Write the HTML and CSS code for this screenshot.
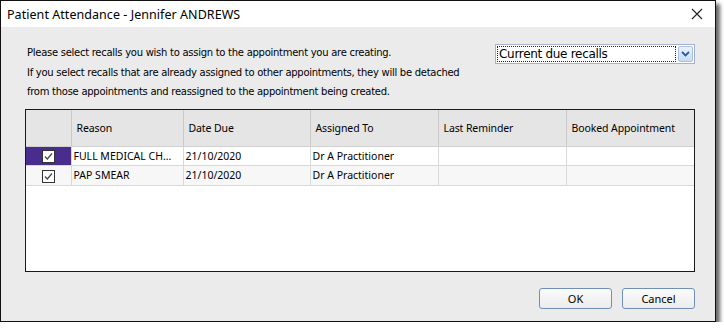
FILE: index.html
```html
<!DOCTYPE html>
<html lang="en">
    <head>
        <meta charset="UTF-8" />
        <title>Patient Attendance</title>
        <link rel="stylesheet" href="styles.css">
    </head>
    <body>
        <div class="window">
            <div class="titlebar">
                <span class="title">Patient Attendance - Jennifer ANDREWS</span>
                <span class="close">
                    <svg width="12" height="12" viewBox="0 0 12 12"><path d="M1 1L11 11M11 1L1 11" stroke="#222" stroke-width="1.1" fill="none"/></svg>
                </span>
            </div>
            <div class="content">
                <div class="top">
                    <div class="info">
                        <p>Please select recalls you wish to assign to the appointment you are creating.</p>
                        <p>If you select recalls that are already assigned to other appointments, they will be detached</p>
                        <p>from those appointments and reassigned to the appointment being created.</p>
                    </div>
                    <div class="combo">
                        <span class="combo-text">Current due recalls</span>
                        <span class="combo-btn">
                            <svg width="9" height="6" viewBox="0 0 9 6"><path d="M1 1L4.5 4.5L8 1" stroke="#2b5ea8" stroke-width="1.8" fill="none"/></svg>
                        </span>
                    </div>
                </div>

                <div class="grid">
                    <table>
                        <thead>
                            <tr>
                                <th class="col-check"></th>
                                <th class="col-reason">Reason</th>
                                <th class="col-date">Date Due</th>
                                <th class="col-mid">Assigned To</th>
                                <th class="col-mid">Last Reminder</th>
                                <th>Booked Appointment</th>
                            </tr>
                        </thead>
                        <tbody>
                            <tr class="row">
                                <td class="check selected">
                                    <span class="box"><svg width="11" height="11" viewBox="0 0 11 11"><path d="M2 5.5L4.3 8L9 2.5" stroke="#444" stroke-width="1.2" fill="none"/></svg></span>
                                </td>
                                <td>FULL MEDICAL CH...</td>
                                <td>21/10/2020</td>
                                <td>Dr A Practitioner</td>
                                <td></td>
                                <td></td>
                            </tr>
                            <tr class="row alt">
                                <td class="check">
                                    <span class="box"><svg width="11" height="11" viewBox="0 0 11 11"><path d="M2 5.5L4.3 8L9 2.5" stroke="#444" stroke-width="1.2" fill="none"/></svg></span>
                                </td>
                                <td>PAP SMEAR</td>
                                <td>21/10/2020</td>
                                <td>Dr A Practitioner</td>
                                <td></td>
                                <td></td>
                            </tr>
                        </tbody>
                    </table>
                </div>

                <div class="actions">
                    <button>OK</button>
                    <button>Cancel</button>
                </div>
            </div>
        </div>
    </body>
</html>
```

FILE: styles.css
```css
* {
    box-sizing: border-box;
}
body {
    margin: 0;
    background-color: #fff;
    font-family: "Noto Sans", "Open Sans", sans-serif;
    font-size: 11px;
    color: #000;
}
.window {
    width: 716px;
    height: 322px;
    border: 1px solid #111;
    background-color: #ebebeb;
    box-shadow: 4px 4px 4px rgba(0, 0, 0, 0.6);
    display: flex;
    flex-direction: column;
}
.titlebar {
    height: 27px;
    background-color: #fff;
    display: flex;
    align-items: center;
    justify-content: space-between;
    padding: 0 10px 0 6px;
}
.title {
    font-size: 12.5px;
    letter-spacing: 0.05px;
}
.close {
    display: flex;
    margin-right: 2px;
}
.content {
    flex: 1;
    padding: 17px 20px 12px 24px;
    display: flex;
    flex-direction: column;
}
.top {
    display: flex;
    justify-content: space-between;
    height: 65px;
}
.info {
    padding-left: 2px;
    margin-top: -1px;
}
.info p {
    margin: 0;
    line-height: 19.5px;
    font-family: "DejaVu Sans", sans-serif;
    font-size: 10px;
    letter-spacing: -0.27px;
}
.combo {
    width: 200px;
    height: 20px;
    border: 1px solid #a6b0cf;
    background-color: #fff;
    display: flex;
    align-items: center;
    padding: 1px;
}
.combo-text {
    flex: 1;
    height: 16px;
    line-height: 14px;
    border: 1px dotted #222;
    padding-left: 1px;
    font-family: "DejaVu Sans", sans-serif;
    font-size: 12px;
    letter-spacing: -0.3px;
    color: #000;
}
.combo-btn {
    width: 15px;
    height: 16px;
    margin-left: 2px;
    border: 1px solid #a9c1e4;
    border-radius: 2px;
    background: linear-gradient(#eaf2fd, #c8dbf5);
    display: flex;
    align-items: center;
    justify-content: center;
}
.grid {
    height: 163px;
    border: 1px solid #1a1a1a;
    background-color: #fff;
}
table {
    border-collapse: collapse;
    width: 100%;
    table-layout: fixed;
}
th {
    height: 36px;
    background-color: #e5e5e5;
    font-weight: normal;
    text-align: left;
    padding: 0 0 0 5px;
    border-left: 1px solid #c9c9c9;
    border-bottom: 1px solid #d0d0d0;
    font-size: 10.5px;
    letter-spacing: -0.1px;
}
th:first-child {
    border-left: none;
}
.col-check {
    width: 45px;
}
.col-reason {
    width: 112px;
}
.col-date {
    width: 127px;
}
.col-mid {
    width: 128px;
}
td {
    height: 19.5px;
    padding: 0 0 0 2px;
    border-left: 1px solid #d8d8d8;
    border-bottom: 1px solid #d8d8d8;
    white-space: nowrap;
    overflow: hidden;
    font-size: 10.5px;
}
td:first-child {
    border-left: none;
}
.alt td {
    background-color: #f7f7f7;
}
.check {
    padding: 0;
    text-align: center;
}
.check.selected {
    background-color: #482c8e;
}
.box {
    display: inline-flex;
    width: 13px;
    height: 13px;
    border: 1px solid #333;
    background-color: #fff;
    vertical-align: middle;
}
.actions {
    display: flex;
    justify-content: flex-end;
    gap: 10px;
    margin-top: 16px;
}
button {
    width: 73px;
    height: 21px;
    border: 1px solid #6f8fb8;
    border-radius: 3px;
    background: linear-gradient(#fbfbfb, #ececec);
    font-family: "Noto Sans", "Open Sans", sans-serif;
    font-size: 11px;
    color: #000;
    padding: 0;
}
```
